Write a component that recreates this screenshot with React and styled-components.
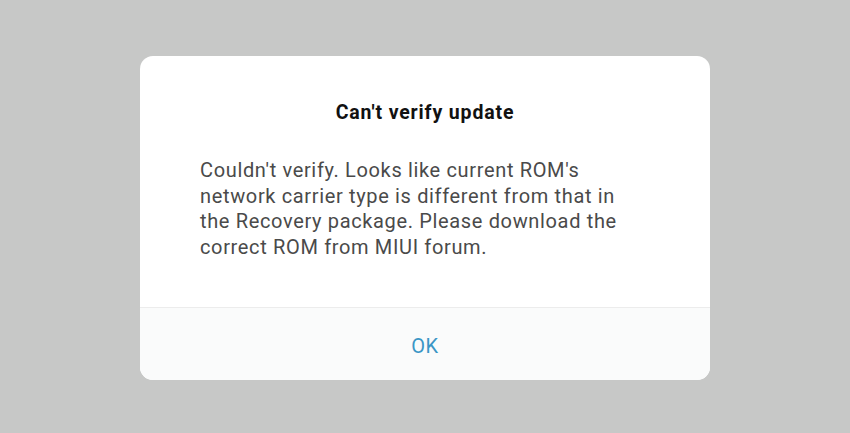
import styled, { createGlobalStyle } from "styled-components";

const GlobalStyle = createGlobalStyle`
  html, body {
    margin: 0;
    padding: 0;
    background: #c7c8c7;
  }
  body {
    font-family: Roboto, "Noto Sans", "Liberation Sans", sans-serif;
  }
`;

// 회색 배경 화면
const Screen = styled.div`
  width: 850px;
  height: 433px;
  display: flex;
  justify-content: center;
  padding-top: 56px;
  box-sizing: border-box;
`;

// 대화상자 카드
const Dialog = styled.div`
  width: 570px;
  height: 324px;
  background: #ffffff;
  border-radius: 13px;
  overflow: hidden;
  display: flex;
  flex-direction: column;
`;

const Title = styled.div`
  margin-top: 44px;
  text-align: center;
  font-size: 19.5px;
  font-weight: 700;
  letter-spacing: 0.85px;
  color: #111111;
  line-height: 26px;
`;

const Message = styled.p`
  margin: 32px 0 0 0;
  padding: 0 80px 0 60px;
  font-size: 20px;
  letter-spacing: 0.65px;
  line-height: 25.5px;
  color: #4a4a4a;
  flex: 1;
`;

// 하단 버튼 영역
const Footer = styled.div`
  height: 72px;
  border-top: 1px solid #ececec;
  background: #fafbfb;
  display: flex;
  align-items: center;
  justify-content: center;
`;

const OkButton = styled.button`
  border: none;
  background: none;
  font-family: inherit;
  font-size: 20px;
  letter-spacing: 0.5px;
  color: #3b96c6;
  padding: 0 40px;
  margin-top: 3px;
  cursor: pointer;
`;

export default function App() {
  return (
    <>
      <GlobalStyle />
      <Screen>
        <Dialog>
          <Title>Can't verify update</Title>
          <Message>
            Couldn't verify. Looks like current ROM's network carrier type is
            different from that in the Recovery package. Please download the
            correct ROM from MIUI forum.
          </Message>
          <Footer>
            <OkButton>OK</OkButton>
          </Footer>
        </Dialog>
      </Screen>
    </>
  );
}
